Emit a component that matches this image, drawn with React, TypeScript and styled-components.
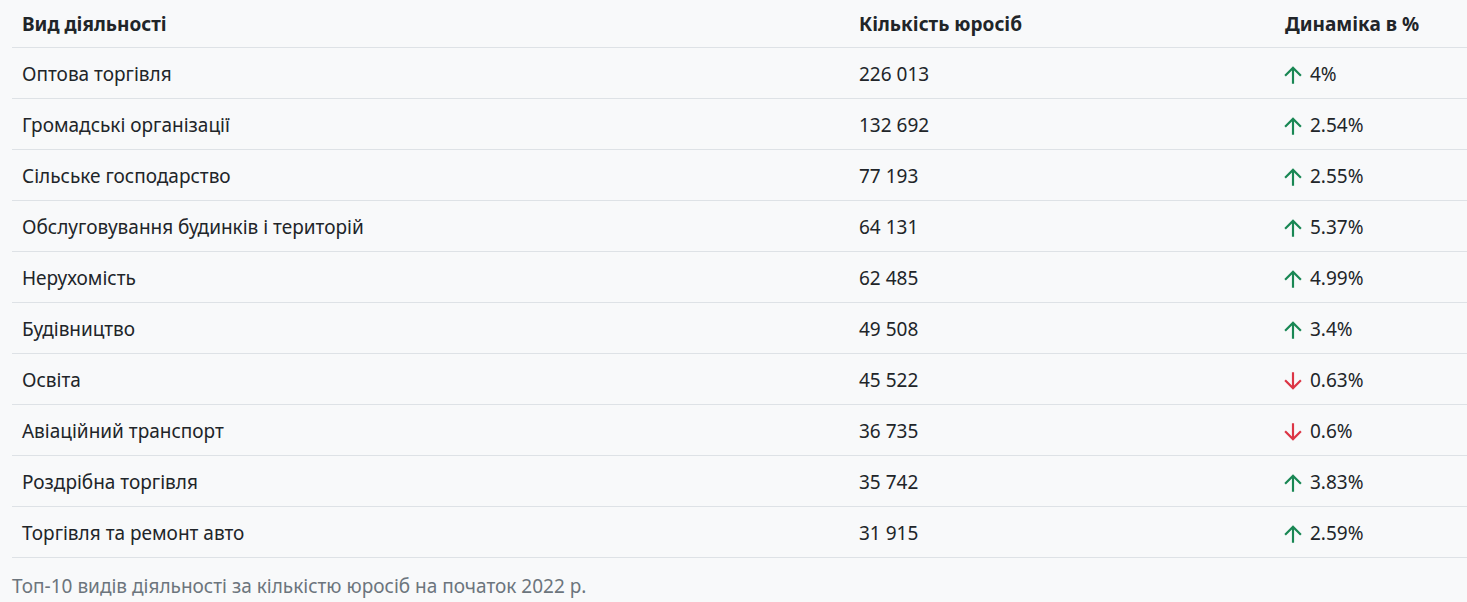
import React from "react";
import styled, { createGlobalStyle } from "styled-components";

const Global = createGlobalStyle`
  html, body { margin: 0; padding: 0; background: #f8f9fa; }
  body { font-family: "Noto Sans", "Open Sans", sans-serif; color: #212529; }
`;

const Wrap = styled.div`
  padding: 0 0 0 12px;
`;

const Table = styled.table`
  width: 100%;
  border-collapse: collapse;
  table-layout: fixed;
  font-size: 19px;
  caption-side: bottom;
`;

const Caption = styled.caption`
  text-align: left;
  color: #6c757d;
  font-size: 19px;
  line-height: 27px;
  padding: 15px 0 0;
`;

const Th = styled.th`
  text-align: left;
  font-weight: 700;
  line-height: 27px;
  padding: 11px 10px 9px;
  border-bottom: 1px solid #dee2e6;
`;

const Td = styled.td`
  line-height: 27px;
  height: 27px;
  padding: 13px 10px 10px;
  border-bottom: 1px solid #dee2e6;
  vertical-align: middle;
`;

const Trend = styled.div<{ $up: boolean }>`
  display: flex;
  align-items: center;
  gap: 4px;
  height: 27px;
  margin-left: -5px;
  svg { color: ${(p) => (p.$up ? "#198754" : "#dc3545")}; flex: none; }
`;

const UpArrow = () => (
  <svg width="26" height="26" viewBox="0 0 24 24" fill="currentColor">
    <path d="M4 12l1.41 1.41L11 7.83V20h2V7.83l5.58 5.59L20 12l-8-8-8 8z" />
  </svg>
);
const DownArrow = () => (
  <svg width="26" height="26" viewBox="0 0 24 24" fill="currentColor">
    <path d="M20 12l-1.41-1.41L13 16.17V4h-2v12.17l-5.58-5.59L4 12l8 8 8-8z" />
  </svg>
);

const rows: [string, string, boolean, string][] = [
  ["Оптова торгівля", "226 013", true, "4%"],
  ["Громадські організації", "132 692", true, "2.54%"],
  ["Сільське господарство", "77 193", true, "2.55%"],
  ["Обслуговування будинків і територій", "64 131", true, "5.37%"],
  ["Нерухомість", "62 485", true, "4.99%"],
  ["Будівництво", "49 508", true, "3.4%"],
  ["Освіта", "45 522", false, "0.63%"],
  ["Авіаційний транспорт", "36 735", false, "0.6%"],
  ["Роздрібна торгівля", "35 742", true, "3.83%"],
  ["Торгівля та ремонт авто", "31 915", true, "2.59%"],
];

export default function App() {
  return (
    <>
      <Global />
      <Wrap>
        <Table>
          <colgroup>
            <col style={{ width: 837 }} />
            <col style={{ width: 426 }} />
            <col />
          </colgroup>
          <Caption>Топ-10 видів діяльності за кількістю юросіб на початок 2022 р.</Caption>
          <thead>
            <tr>
              <Th>Вид діяльності</Th>
              <Th>Кількість юросіб</Th>
              <Th>Динаміка в %</Th>
            </tr>
          </thead>
          <tbody>
            {rows.map(([name, count, up, pct]) => (
              <tr key={name}>
                <Td>{name}</Td>
                <Td>{count}</Td>
                <Td>
                  <Trend $up={up}>
                    {up ? <UpArrow /> : <DownArrow />}
                    {pct}
                  </Trend>
                </Td>
              </tr>
            ))}
          </tbody>
        </Table>
      </Wrap>
    </>
  );
}
